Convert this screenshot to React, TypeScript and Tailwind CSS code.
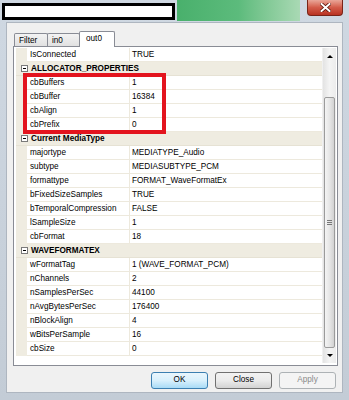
type Row =
  | { kind: "cat"; label: string }
  | { kind: "prop"; name: string; value: string };

const rows: Row[] = [
  { kind: "prop", name: "IsConnected", value: "TRUE" },
  { kind: "cat", label: "ALLOCATOR_PROPERTIES" },
  { kind: "prop", name: "cbBuffers", value: "1" },
  { kind: "prop", name: "cbBuffer", value: "16384" },
  { kind: "prop", name: "cbAlign", value: "1" },
  { kind: "prop", name: "cbPrefix", value: "0" },
  { kind: "cat", label: "Current MediaType" },
  { kind: "prop", name: "majortype", value: "MEDIATYPE_Audio" },
  { kind: "prop", name: "subtype", value: "MEDIASUBTYPE_PCM" },
  { kind: "prop", name: "formattype", value: "FORMAT_WaveFormatEx" },
  { kind: "prop", name: "bFixedSizeSamples", value: "TRUE" },
  { kind: "prop", name: "bTemporalCompression", value: "FALSE" },
  { kind: "prop", name: "lSampleSize", value: "1" },
  { kind: "prop", name: "cbFormat", value: "18" },
  { kind: "cat", label: "WAVEFORMATEX" },
  { kind: "prop", name: "wFormatTag", value: "1 (WAVE_FORMAT_PCM)" },
  { kind: "prop", name: "nChannels", value: "2" },
  { kind: "prop", name: "nSamplesPerSec", value: "44100" },
  { kind: "prop", name: "nAvgBytesPerSec", value: "176400" },
  { kind: "prop", name: "nBlockAlign", value: "4" },
  { kind: "prop", name: "wBitsPerSample", value: "16" },
  { kind: "prop", name: "cbSize", value: "0" },
];

function CollapseBox() {
  return (
    <span className="w-[7px] h-[7px] border border-[#7a7a7a] bg-white flex items-center justify-center">
      <span className="w-[3px] h-px bg-black" />
    </span>
  );
}

function GridRow({ row }: { row: Row }) {
  if (row.kind === "cat") {
    return (
      <div className="h-[14px] flex items-center bg-[#efece1] border-b border-[#e6e2d4]">
        <div className="w-[13px] flex justify-end pr-[1px]">
          <CollapseBox />
        </div>
        <span className="pl-[2px] font-bold">{row.label}</span>
      </div>
    );
  }
  return (
    <div className="h-[14px] flex">
      <div className="w-[11px] bg-[#efece1]" />
      <div className="w-[102px] pl-[3px] border-b border-[#ede9dd] flex items-center truncate">
        {row.name}
      </div>
      <div className="w-px bg-[#ede9dd]" />
      <div className="flex-1 pl-[2px] border-b border-[#ede9dd] flex items-center truncate">
        {row.value}
      </div>
    </div>
  );
}

function Scrollbar() {
  return (
    <div className="w-[14px] flex flex-col bg-gradient-to-r from-[#e3e3e3] via-[#f4f4f4] to-[#ececec] border-l border-[#f0f0f0]">
      <div className="h-[16px] flex items-center justify-center">
        <span className="w-0 h-0 border-l-[3px] border-r-[3px] border-b-[3px] border-l-transparent border-r-transparent border-b-black" />
      </div>
      <div className="h-[33px]" />
      <div className="h-[251px] mx-[1px] rounded-[2px] border border-[#9b9b9b] bg-gradient-to-r from-[#f4f4f4] via-[#e6e6e6] to-[#d2d2d2] flex flex-col items-center justify-center gap-[1px]">
        <span className="w-[5px] h-px bg-[#777]" />
        <span className="w-[5px] h-px bg-[#777]" />
        <span className="w-[5px] h-px bg-[#777]" />
      </div>
      <div className="flex-1 flex items-center justify-center">
        <span className="w-0 h-0 border-l-[3px] border-r-[3px] border-t-[3px] border-l-transparent border-r-transparent border-t-black" />
      </div>
    </div>
  );
}

function Tab({ label, active, w }: { label: string; active?: boolean; w: string }) {
  if (active) {
    return (
      <div
        className={`${w} h-[16px] -mb-px relative z-10 bg-white border border-b-0 border-[#898c95] rounded-t-[2px] pl-[6px] pt-[2px] leading-[10px]`}
      >
        {label}
      </div>
    );
  }
  return (
    <div
      className={`${w} h-[13px] bg-gradient-to-b from-[#f3f3f3] to-[#e1e1e1] border border-b-0 border-[#898c95] rounded-t-[2px] pl-[4px] pt-[2px] leading-[10px] -mr-px`}
    >
      {label}
    </div>
  );
}

export default function App() {
  return (
    <div
      className="w-[349px] h-[400px] relative overflow-hidden bg-gradient-to-b from-[#cfd8e2] to-[#c3ccd6] text-black text-[8.2px]"
      style={{ fontFamily: '"Liberation Sans", Arial, sans-serif' }}
    >
      {/* title bar */}
      <div className="h-[22px] flex">
        <div className="ml-[2px] mt-[3px] w-[173px] h-[17px] border-[3px] border-black bg-white" />
        <div className="ml-[2px] w-[123px] h-[21px] bg-gradient-to-r from-[#49b06c] via-[#5cbb7c] to-[#a9d9b4]" />
        <div className="ml-[7px] w-[36px] h-[16px] rounded-b-[4px] border border-t-0 border-[#7a2418] bg-gradient-to-b from-[#e9a598] via-[#d35b49] to-[#b83222] flex items-center justify-center">
          <svg width="11" height="9" viewBox="0 0 11 9">
            <path d="M1.5 1 L9.5 8 M9.5 1 L1.5 8" stroke="#5a1208" strokeWidth="3.6" strokeLinecap="square" />
            <path d="M1.5 1 L9.5 8 M9.5 1 L1.5 8" stroke="#ffffff" strokeWidth="2" strokeLinecap="square" />
          </svg>
        </div>
      </div>

      {/* client area */}
      <div className="ml-[6px] w-[337px] h-[371px] bg-[#f0f0f0] border border-[#aeb6c0] pt-[8px] pl-[6px] pr-[4px] flex flex-col">
        <div className="h-[15px] pl-[1px] flex items-end">
          <Tab label="Filter" w="w-[34px]" />
          <Tab label="in0" w="w-[33px]" />
          <Tab label="out0" w="w-[36px]" active />
        </div>
        <div className="h-[320px] bg-white border border-[#898c95] pt-px pl-[2px] pr-px pb-[2px]">
          <div className="h-[315px] flex">
            <div className="flex-1 leading-[14px]">
              {rows.map((r, i) => (
                <GridRow key={i} row={r} />
              ))}
            </div>
            <Scrollbar />
          </div>
        </div>
        <div className="mt-[6px] h-[17px] flex justify-end gap-[7px] pr-[2px]">
          <button className="w-[57px] h-[17px] rounded-[3px] border border-[#3c7fb1] bg-gradient-to-b from-[#eaf6fd] via-[#d9f0fc] to-[#a9dbf6] leading-none">
            OK
          </button>
          <button className="w-[57px] h-[17px] rounded-[3px] border border-[#707070] bg-gradient-to-b from-[#f2f2f2] via-[#ebebeb] to-[#d3d3d3] leading-none">
            Close
          </button>
          <button className="w-[57px] h-[17px] rounded-[3px] border border-[#adb2b5] bg-[#f4f4f4] text-[#8a8a8a] leading-none">
            Apply
          </button>
        </div>
      </div>

      {/* red highlight */}
      <div className="absolute left-[23px] top-[73px] w-[143px] h-[61px] border-4 border-[#e3141e]" />
    </div>
  );
}
